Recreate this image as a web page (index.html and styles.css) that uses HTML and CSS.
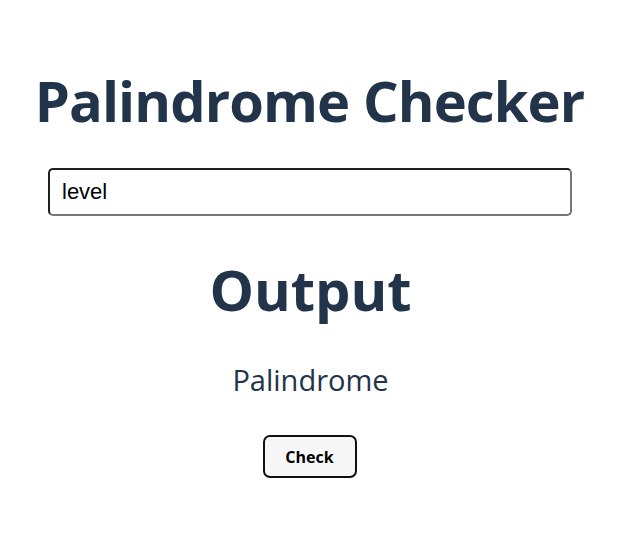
FILE: index.html
```html
<!DOCTYPE html>
<html>
<head>
<meta charset="utf-8">
<link rel="stylesheet" href="styles.css">
</head>
<body>
<main class="app">
  <h1 class="title">Palindrome Checker</h1>
  <input class="text-input" type="text" value="level">
  <h2 class="output-title">Output</h2>
  <p class="result">Palindrome</p>
  <button class="check-btn">Check</button>
</main>
</body>
</html>
```
FILE: styles.css
```css
* { box-sizing: border-box; }
body {
  margin: 0;
  background: #ffffff;
  font-family: "Open Sans", "DejaVu Sans", sans-serif;
  color: #22344a;
}
.app {
  display: flex;
  flex-direction: column;
  align-items: center;
  padding-top: 60px;
}
.title {
  margin: 0 3px 0 0;
  font-size: 56px;
  font-weight: 700;
  line-height: 80px;
  letter-spacing: -0.9px;
}
.text-input {
  margin-top: 28px;
  margin-right: 2px;
  width: 524px;
  height: 48px;
  padding: 0 12px;
  font-family: "Liberation Sans", Arial, sans-serif;
  font-size: 22px;
  color: #000;
  border: 2px solid;
  border-color: #1f1f1f #767676 #767676 #1f1f1f;
  border-radius: 5px;
  outline: none;
}
.output-title {
  margin: 33px 1px 0 0;
  font-size: 56px;
  font-weight: 700;
  line-height: 80px;
}
.result {
  margin: 31px 1px 0 0;
  font-size: 29px;
  font-weight: 400;
  line-height: 40px;
}
.check-btn {
  margin: 35px 3px 0 0;
  width: 94px;
  height: 43px;
  font-family: "Open Sans", sans-serif;
  font-size: 16px;
  font-weight: 700;
  color: #000;
  background: #f7f7f7;
  border: 2px solid #111;
  border-radius: 7px;
}
```
